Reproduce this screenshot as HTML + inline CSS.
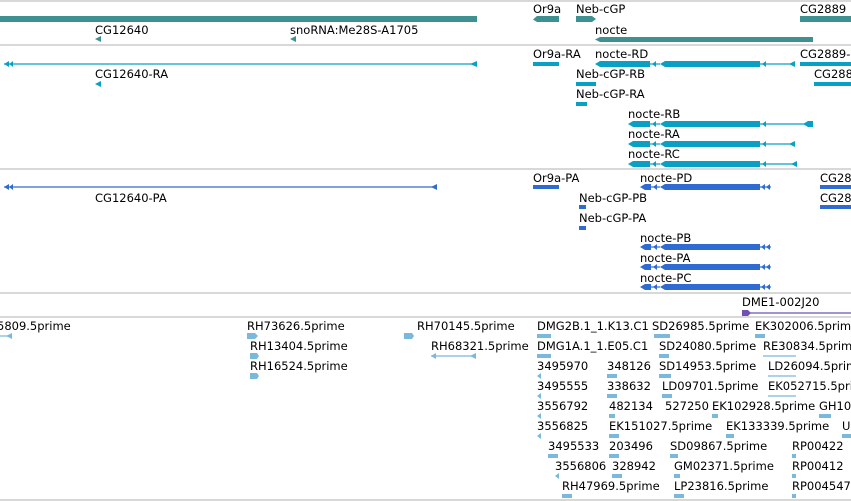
<!DOCTYPE html>
<html><head><meta charset="utf-8"><style>
html,body{margin:0;padding:0;background:#fff;width:851px;height:501px;overflow:hidden}
svg text{font-family:"DejaVu Sans","Liberation Sans",sans-serif;font-size:11.5px;fill:#000}
</style></head><body>
<svg width="851" height="501" viewBox="0 0 851 501" xmlns="http://www.w3.org/2000/svg">
<g stroke="#c0c0c0" stroke-width="1.2">
<line x1="0" y1="1" x2="851" y2="1"/><line x1="0" y1="45" x2="851" y2="45"/>
<line x1="0" y1="169" x2="851" y2="169"/><line x1="0" y1="293" x2="851" y2="293"/>
<line x1="0" y1="317" x2="851" y2="317"/><line x1="0" y1="500" x2="851" y2="500"/>
</g>
<!-- Track 1 -->
<g fill="#3f9090">
<rect x="0" y="16" width="477" height="6"/>
<polygon points="95,39 101,36 101,42"/><polygon points="290,39 296,36 296,42"/>
<polygon points="533,19.5 537,16 559,16 559,22 537,22"/>
<polygon points="576,16 592,16 596,19 592,22 576,22"/>
<rect x="800" y="16" width="51" height="6"/>
<polygon points="595,39.5 600,37 813,37 813,42 600,42"/>
</g>
<text x="95" y="34">CG12640</text><text x="290" y="34">snoRNA:Me28S-A1705</text>
<text x="533" y="13">Or9a</text><text x="576" y="13">Neb-cGP</text><text x="800" y="13">CG2889</text>
<text x="595" y="34">nocte</text>
<!-- Track 2 -->
<g fill="#0aa0c4" stroke="#0aa0c4">
<line x1="4" y1="64" x2="477" y2="64" stroke-width="1.2"/>
<polygon points="4,64 9,61 9,67" stroke="none"/><polygon points="9,64 13,61 13,67" stroke="none"/>
<polygon points="470,64 477,61 477,67" stroke="none"/>
<polygon points="95,84 101,81 101,87" stroke="none"/>
<rect x="533" y="62" width="26" height="4" stroke="none"/>
<rect x="576" y="82" width="20" height="4" stroke="none"/>
<rect x="576" y="102" width="11" height="4" stroke="none"/>
<rect x="800" y="62" width="51" height="4" stroke="none"/>
<rect x="814" y="82" width="37" height="4" stroke="none"/>
</g>
<g fill="#0aa0c4" stroke="#0aa0c4" stroke-width="1.2">
<polygon points="595,64 600,61 650,61 650,67 600,67" stroke="none"/>
<polygon points="660,64 665,61 760,61 760,67 665,67" stroke="none"/>
<line x1="650" y1="64" x2="660" y2="64"/><line x1="760" y1="64" x2="795" y2="64"/>
<polygon points="652,64 656,61 656,67" stroke="none"/><polygon points="762,64 766,61 766,67" stroke="none"/>
<polygon points="789,64 795,61 795,67" stroke="none"/>
<polygon points="628,124 633,121 650,121 650,127 633,127" stroke="none"/>
<polygon points="660,124 665,121 760,121 760,127 665,127" stroke="none"/>
<line x1="650" y1="124" x2="660" y2="124"/><line x1="760" y1="124" x2="813" y2="124"/>
<polygon points="652,124 656,121 656,127" stroke="none"/><polygon points="762,124 766,121 766,127" stroke="none"/>
<polygon points="803,124 808,121 813,121 813,127 808,127" stroke="none"/>
<polygon points="628,144 633,141 650,141 650,147 633,147" stroke="none"/>
<polygon points="660,144 665,141 760,141 760,147 665,147" stroke="none"/>
<line x1="650" y1="144" x2="660" y2="144"/><line x1="760" y1="144" x2="795" y2="144"/>
<polygon points="652,144 656,141 656,147" stroke="none"/><polygon points="762,144 766,141 766,147" stroke="none"/>
<polygon points="789,144 795,141 795,147" stroke="none"/>
<polygon points="628,164 633,161 650,161 650,167 633,167" stroke="none"/>
<polygon points="660,164 665,161 760,161 760,167 665,167" stroke="none"/>
<line x1="650" y1="164" x2="660" y2="164"/><line x1="760" y1="164" x2="797" y2="164"/>
<polygon points="652,164 656,161 656,167" stroke="none"/><polygon points="762,164 766,161 766,167" stroke="none"/>
<polygon points="791,164 797,161 797,167" stroke="none"/>
</g>
<text x="95" y="78">CG12640-RA</text><text x="533" y="58">Or9a-RA</text><text x="595" y="58">nocte-RD</text>
<text x="800" y="58">CG2889-</text><text x="576" y="78">Neb-cGP-RB</text><text x="814" y="78">CG288</text>
<text x="576" y="98">Neb-cGP-RA</text><text x="628" y="118">nocte-RB</text><text x="628" y="138">nocte-RA</text><text x="628" y="158">nocte-RC</text>
<!-- Track 3 -->
<g fill="#2f6bd0" stroke="#2f6bd0" stroke-width="1.2">
<line x1="4" y1="187" x2="437" y2="187"/>
<polygon points="4,187 9,184 9,190" stroke="none"/><polygon points="9,187 13,184 13,190" stroke="none"/>
<polygon points="431,187 437,184 437,190" stroke="none"/>
<rect x="533" y="185" width="26" height="4" stroke="none"/>
<rect x="820" y="185" width="31" height="4" stroke="none"/>
<rect x="820" y="205" width="31" height="4" stroke="none"/>
<rect x="579" y="205" width="7" height="4" stroke="none"/>
<rect x="579" y="226" width="7" height="4" stroke="none"/>
<g id="pb">
<polygon points="640,187 645,184 651,184 651,190 645,190" stroke="none"/>
<line x1="651" y1="187" x2="660" y2="187"/>
<polygon points="653,187 657,184 657,190" stroke="none"/>
<polygon points="660,187 665,184 760,184 760,190 665,190" stroke="none"/>
<line x1="760" y1="187" x2="771" y2="187"/>
<polygon points="761,187 765,184 765,190" stroke="none"/><polygon points="766,187 770,184 770,190" stroke="none"/>
</g>
<use href="#pb" y="60"/><use href="#pb" y="80"/><use href="#pb" y="100"/>
</g>
<text x="95" y="202">CG12640-PA</text><text x="533" y="182">Or9a-PA</text><text x="640" y="182">nocte-PD</text>
<text x="820" y="182">CG28</text><text x="579" y="202">Neb-cGP-PB</text><text x="820" y="202">CG28</text>
<text x="579" y="222">Neb-cGP-PA</text><text x="640" y="242">nocte-PB</text><text x="640" y="262">nocte-PA</text><text x="640" y="282">nocte-PC</text>
<!-- Track 4 -->
<line x1="742" y1="313" x2="851" y2="313" stroke="#7050b0" stroke-width="1.2"/>
<polygon points="742,310 748,310 751,313 748,316 742,316" fill="#7050b0"/>
<text x="742" y="306">DME1-002J20</text>
<!-- Track 5 -->
<g fill="#7ab8dc" stroke="#7ab8dc" stroke-width="1.2">
<line x1="0" y1="336" x2="12" y2="336"/><polygon points="6,336 12,333 12,339" stroke="none"/>
<polygon points="247,333 255,333 258,336 255,339 247,339" stroke="none"/>
<polygon points="250,353 257,353 259,356 257,359 250,359" stroke="none"/>
<polygon points="250,373 257,373 259,376 257,379 250,379" stroke="none"/>
<polygon points="404,333 412,333 414,336 412,339 404,339" stroke="none"/>
<line x1="431" y1="356" x2="476" y2="356"/><polygon points="431,356 436,353 436,359" stroke="none"/><polygon points="470,356 476,353 476,359" stroke="none"/>
<rect x="537" y="334" width="14" height="4" stroke="none"/><rect x="537" y="354" width="14" height="4" stroke="none"/>
<polygon points="537,376 541,373 541,379" stroke="none"/><polygon points="537,396 541,393 541,399" stroke="none"/>
<polygon points="537,416 541,413 541,419" stroke="none"/><polygon points="537,436 541,433 541,439" stroke="none"/>
<rect x="548" y="454" width="10" height="4" stroke="none"/><polygon points="555,476 559,473 559,479" stroke="none"/>
<rect x="562" y="494" width="10" height="4" stroke="none"/>
<rect x="607" y="374" width="10" height="4" stroke="none"/><rect x="607" y="394" width="10" height="4" stroke="none"/>
<rect x="609" y="414" width="6" height="4" stroke="none"/><rect x="609" y="434" width="10" height="4" stroke="none"/>
<rect x="609" y="454" width="10" height="4" stroke="none"/><rect x="612" y="474" width="10" height="4" stroke="none"/>
<rect x="654" y="334" width="16" height="4" stroke="none"/><rect x="659" y="354" width="10" height="4" stroke="none"/>
<rect x="659" y="374" width="12" height="4" stroke="none"/><rect x="662" y="394" width="10" height="4" stroke="none"/>
<rect x="712" y="414" width="6" height="4" stroke="none"/><rect x="670" y="454" width="8" height="4" stroke="none"/>
<rect x="674" y="474" width="6" height="4" stroke="none"/><rect x="674" y="494" width="10" height="4" stroke="none"/>
<rect x="726" y="434" width="8" height="4" stroke="none"/>
<rect x="755" y="334" width="10" height="4" stroke="none"/>
<line x1="763" y1="356" x2="796" y2="356"/><line x1="768" y1="376" x2="796" y2="376"/><line x1="768" y1="396" x2="796" y2="396"/>
<rect x="819" y="414" width="12" height="4" stroke="none"/><rect x="842" y="434" width="9" height="4" stroke="none"/>
<rect x="792" y="454" width="4" height="4" stroke="none"/><rect x="792" y="474" width="4" height="4" stroke="none"/><rect x="792" y="494" width="4" height="4" stroke="none"/>
</g>
<text x="-3" y="330">5809.5prime</text>
<text x="247" y="330">RH73626.5prime</text><text x="250" y="350">RH13404.5prime</text><text x="250" y="370">RH16524.5prime</text>
<text x="417" y="330">RH70145.5prime</text><text x="431" y="350">RH68321.5prime</text>
<text x="537" y="330">DMG2B.1_1.K13.C1</text><text x="652" y="330">SD26985.5prime</text><text x="755" y="330">EK302006.5prime</text>
<text x="537" y="350">DMG1A.1_1.E05.C1</text><text x="659" y="350">SD24080.5prime</text><text x="763" y="350">RE30834.5prime</text>
<text x="537" y="370">3495970</text><text x="607" y="370">348126</text><text x="659" y="370">SD14953.5prime</text><text x="768" y="370">LD26094.5prime</text>
<text x="537" y="390">3495555</text><text x="607" y="390">338632</text><text x="662" y="390">LD09701.5prime</text><text x="768" y="390">EK052715.5prime</text>
<text x="537" y="410">3556792</text><text x="609" y="410">482134</text><text x="665" y="410">527250</text><text x="712" y="410">EK102928.5prime</text><text x="819" y="410">GH10</text>
<text x="537" y="430">3556825</text><text x="609" y="430">EK151027.5prime</text><text x="726" y="430">EK133339.5prime</text><text x="842" y="430">U</text>
<text x="548" y="450">3495533</text><text x="609" y="450">203496</text><text x="670" y="450">SD09867.5prime</text><text x="792" y="450">RP00422</text>
<text x="555" y="470">3556806</text><text x="612" y="470">328942</text><text x="674" y="470">GM02371.5prime</text><text x="792" y="470">RP00412</text>
<text x="562" y="490">RH47969.5prime</text><text x="674" y="490">LP23816.5prime</text><text x="792" y="490">RP004547</text>
</svg>
</body></html>
